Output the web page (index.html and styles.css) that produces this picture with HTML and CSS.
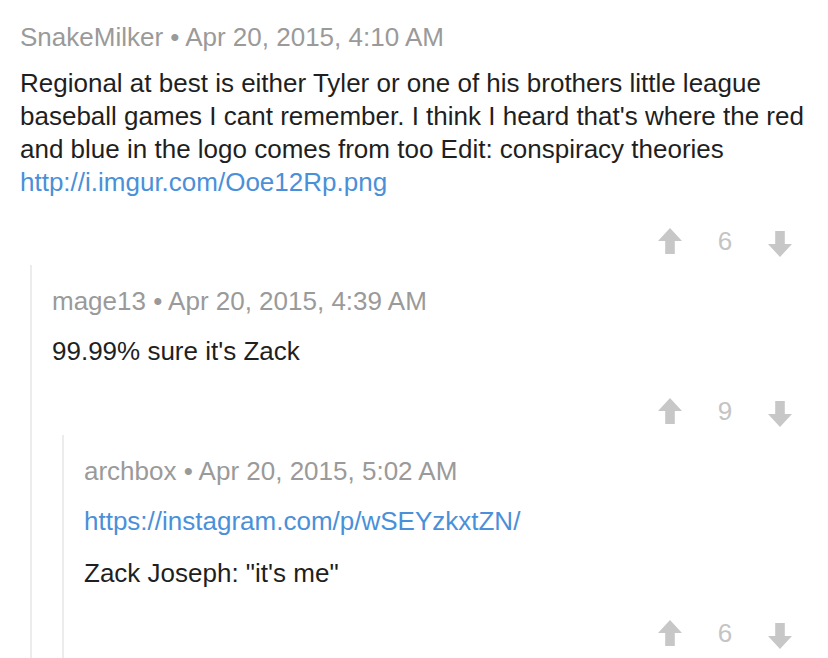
FILE: index.html
```html
<!DOCTYPE html>
<html>
<head>
<meta charset="utf-8">
<link rel="stylesheet" href="styles.css">
</head>
<body>
<div class="thread">
  <div class="comment">
    <div class="meta">SnakeMilker • Apr 20, 2015, 4:10 AM</div>
    <div class="body body-first">
      <p>Regional at best is either Tyler or one of his brothers little league baseball games I cant remember. I think I heard that's where the red and blue in the logo comes from too Edit: conspiracy theories <a href="#">http://i.imgur.com/Ooe12Rp.png</a></p>
    </div>
    <div class="votes">
      <svg class="arrow up" viewBox="0 0 24 26"><path d="M12 0 L24 13 L16.8 13 L16.8 26 L7.2 26 L7.2 13 L0 13 Z"/></svg>
      <span class="count">6</span>
      <svg class="arrow down" viewBox="0 0 24 26"><path d="M12 26 L24 13 L16.8 13 L16.8 0 L7.2 0 L7.2 13 L0 13 Z"/></svg>
    </div>
    <div class="replies">
      <div class="comment">
        <div class="meta">mage13 • Apr 20, 2015, 4:39 AM</div>
        <div class="body"><p>99.99% sure it's Zack</p></div>
        <div class="votes">
          <svg class="arrow up" viewBox="0 0 24 26"><path d="M12 0 L24 13 L16.8 13 L16.8 26 L7.2 26 L7.2 13 L0 13 Z"/></svg>
          <span class="count">9</span>
          <svg class="arrow down" viewBox="0 0 24 26"><path d="M12 26 L24 13 L16.8 13 L16.8 0 L7.2 0 L7.2 13 L0 13 Z"/></svg>
        </div>
        <div class="replies">
          <div class="comment">
            <div class="meta">archbox • Apr 20, 2015, 5:02 AM</div>
            <div class="body">
              <p><a href="#">https://instagram.com/p/wSEYzkxtZN/</a></p>
              <p>Zack Joseph: "it's me"</p>
            </div>
            <div class="votes">
              <svg class="arrow up" viewBox="0 0 24 26"><path d="M12 0 L24 13 L16.8 13 L16.8 26 L7.2 26 L7.2 13 L0 13 Z"/></svg>
              <span class="count">6</span>
              <svg class="arrow down" viewBox="0 0 24 26"><path d="M12 26 L24 13 L16.8 13 L16.8 0 L7.2 0 L7.2 13 L0 13 Z"/></svg>
            </div>
          </div>
        </div>
      </div>
    </div>
  </div>
</div>
</body>
</html>
```

FILE: styles.css
```css
html, body {
  margin: 0;
  padding: 0;
  background: #ffffff;
}
body {
  font-family: "Liberation Sans", Arial, sans-serif;
  font-size: 26px;
  color: #1f1f1f;
  width: 828px;
  height: 658px;
  overflow: hidden;
}
.thread {
  padding: 21px 14px 0 20px;
}
.comment {
  display: flex;
  flex-direction: column;
}
.meta {
  color: #9a9a9a;
  font-size: 26px;
  line-height: 33px;
}
.body {
  margin-top: 17px;
}
.body-first {
  margin-top: 13px;
}
.body p {
  margin: 0 0 19px 0;
  line-height: 33px;
}
.body p:last-child {
  margin-bottom: 0;
}
.body a {
  color: #4a90d9;
  text-decoration: none;
}
.votes {
  display: flex;
  align-items: center;
  justify-content: flex-end;
  gap: 35px;
  margin-top: 25px;
  padding-right: 22px;
  height: 34px;
}
.replies .votes {
  margin-top: 26px;
}
.arrow {
  width: 24px;
  height: 26px;
  fill: #c7c7c7;
}
.arrow.down {
  margin-top: 6px;
}
.count {
  color: #c4c4c4;
  font-size: 26px;
  width: 16px;
  text-align: center;
}
.replies {
  margin-left: 10px;
  margin-top: 7px;
  border-left: 2px solid #ececec;
  padding-left: 20px;
  padding-top: 20px;
  padding-bottom: 40px;
}
```
